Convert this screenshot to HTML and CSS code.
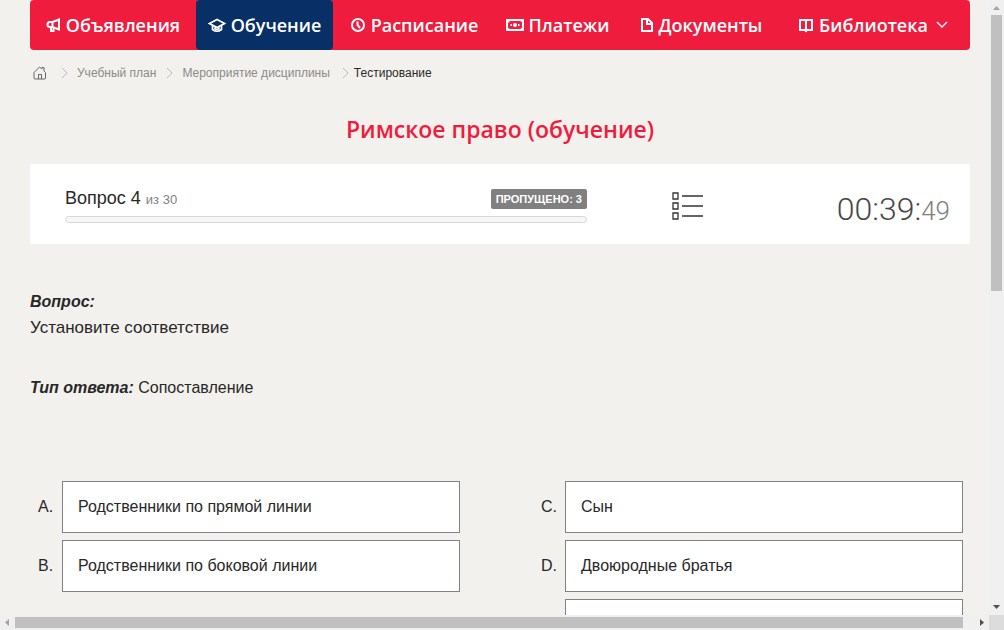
FILE: index.html
```html
<!DOCTYPE html>
<html lang="ru">
<head>
<meta charset="utf-8">
<title>Римское право (обучение)</title>
<link rel="stylesheet" href="styles.css">
</head>
<body>
<div class="frame">
  <div class="page">
    <nav class="nav">
      <a class="nav-item" href="#"><svg class="nav-icon" width="15" height="16" viewBox="0 0 15 16"><path d="M6.500 5L13 2.500v10L6.500 10H4a2.500 2.500 0 0 1 0-5z M6.500 4v7 M5 10v4h2.500v-3"/></svg>Объявления</a>
      <a class="nav-item nav-active" href="#"><svg class="nav-icon cap" width="18" height="16" viewBox="0 0 18 16"><path d="M1.500 6.500L9 2.500l7.500 4L9 10.500z M4.500 8.500v4q4.500 3.500 9 0v-4 M6.500 10.500q.5 2 2.500 2t2.500-2"/></svg>Обучение</a>
      <a class="nav-item" href="#"><svg class="nav-icon" width="16" height="16" viewBox="0 0 16 16"><circle cx="8" cy="8" r="6"/><path d="M7.500 4.500V8l2.500 3"/></svg>Расписание</a>
      <a class="nav-item" href="#"><svg class="nav-icon" width="18" height="16" viewBox="0 0 18 16"><rect x="1" y="3" width="16" height="10"/><path class="solid" d="M1 3h4L2 6zM13 3h4v3zM1 10l4 3H1zM17 10v3h-4z"/><circle class="solid" cx="9" cy="8" r="2"/><path d="M4.500 8h1.500M12 8h1.500"/></svg>Платежи</a>
      <a class="nav-item" href="#"><svg class="nav-icon" width="14" height="16" viewBox="0 0 14 16"><path d="M2 2h6l4 4v8H2z M7 2v5h5"/></svg>Документы</a>
      <a class="nav-item" href="#"><svg class="nav-icon" width="16" height="16" viewBox="0 0 16 16"><path d="M2 3h5l1 1 1-1h5v10H9l-1 1-1-1H2z M8 3v12"/></svg>Библиотека<svg class="chevron" width="12" height="8" viewBox="0 0 12 8"><path d="M1 1l5 5 5-5"/></svg></a>
    </nav>
    <nav class="crumbs">
      <a class="crumb-home" href="#" aria-label="Главная"><svg width="14" height="14" viewBox="0 0 14 14"><path d="M1 6.500l5.500-5.500L9 3V1.500h2V5l1.500 1.500V12q0 1-1 1H2q-1 0-1-1z M5.500 13V8.500h3V13"/></svg></a>
      <svg class="sep" width="8" height="12" viewBox="0 0 8 12"><path d="M1 1l5 5-5 5"/></svg>
      <a href="#">Учебный план</a>
      <svg class="sep" width="8" height="12" viewBox="0 0 8 12"><path d="M1 1l5 5-5 5"/></svg>
      <a href="#">Мероприятие дисциплины</a>
      <svg class="sep sep-last" width="8" height="12" viewBox="0 0 8 12"><path d="M1 1l5 5-5 5"/></svg>
      <span class="crumb-current">Тестирование</span>
    </nav>
    <h1 class="title">Римское право (обучение)</h1>
    <section class="status">
      <div class="progress">
        <div class="progress-head">
          <div class="counter">Вопрос 4 <small>из 30</small></div>
          <span class="badge">ПРОПУЩЕНО: 3</span>
        </div>
        <div class="bar"></div>
      </div>
      <button class="list-button" type="button" aria-label="Список вопросов"><svg width="31" height="28" viewBox="0 0 31 28"><path d="M1 1h5v6H1z M1 11h5v6H1z M1 21h5v6H1z"/><path d="M10 4h21M10 14h21M10 24h21"/></svg></button>
      <div class="timer">00:39:<span class="seconds">49</span></div>
    </section>
    <main class="question">
      <h2 class="label">Вопрос:</h2>
      <p class="text">Установите соответствие</p>
      <p class="type"><em class="label">Тип ответа:</em> Сопоставление</p>
      <div class="match">
        <ol class="column">
          <li class="row"><span class="letter">A.</span><div class="option">Родственники по прямой линии</div></li>
          <li class="row"><span class="letter">B.</span><div class="option">Родственники по боковой линии</div></li>
        </ol>
        <ol class="column">
          <li class="row"><span class="letter">C.</span><div class="option">Сын</div></li>
          <li class="row"><span class="letter">D.</span><div class="option">Двоюродные братья</div></li>
          <li class="row"><span class="letter"></span><div class="option"></div></li>
        </ol>
      </div>
    </main>
  </div>
  <div class="scroll scroll-y">
    <svg class="arrow dim" width="15" height="15" viewBox="0 0 15 15"><path d="M4 10l3.500-4L11 10z"/></svg>
    <div class="thumb thumb-y"></div>
    <div class="space-y"></div>
    <svg class="arrow" width="15" height="15" viewBox="0 0 15 15"><path d="M4 5h7L7.500 9z"/></svg>
  </div>
  <div class="scroll scroll-x">
    <svg class="arrow dim" width="15" height="15" viewBox="0 0 15 15"><path d="M9 4v7L5 7.500z"/></svg>
    <div class="thumb thumb-x"></div>
    <div class="space-x"></div>
    <svg class="arrow" width="15" height="15" viewBox="0 0 15 15"><path d="M6 4l4 3.500L6 11z"/></svg>
  </div>
  <div class="corner"></div>
</div>
</body>
</html>
```
FILE: styles.css
```css
* { box-sizing: border-box; }

body {
  margin: 0;
  background: #f3f1ed;
  color: #282828;
  font: 16px/26px "Liberation Sans", Arial, sans-serif;
}

a { color: inherit; text-decoration: none; }
h1, h2, p, ol { margin: 0; padding: 0; }
svg { fill: none; stroke: currentColor; flex: none; }

.frame {
  display: grid;
  grid-template: minmax(0, 1fr) 15px / minmax(0, 1fr) 15px;
  height: 100vh;
}

.page { padding: 0 19px 0 30px; overflow: hidden; }

.nav {
  display: grid;
  grid-template-columns: 166fr 137fr 162fr 125fr 162fr 182fr;
  height: 50px;
  padding-right: 6px;
  border-radius: 4px;
  background: #ef1c3e;
  color: #fff;
  font: 600 18px/50px "Open Sans", "Noto Sans", sans-serif;
}

.nav-item {
  display: flex;
  align-items: center;
  justify-content: center;
  gap: 5px;
  white-space: nowrap;
}

.nav-active { background: #082f66; border-radius: 4px; }
.nav-icon { stroke-width: 2; }
.cap { stroke-width: 1.7; }
.solid { fill: currentColor; stroke: none; }
.chevron { margin-left: 3px; stroke-width: 1.4; }

.crumbs {
  display: flex;
  align-items: center;
  height: 46px;
  padding-left: 3px;
  color: #8b8b8b;
  font-size: 12px;
  line-height: 16px;
}

.crumb-home { display: flex; margin-right: 14px; color: #666; }
.sep { margin: 0 8px 0 10px; color: #bbb; }
.crumb-home + .sep { margin-left: 0; }
.sep-last { margin: 0 4px 0 12px; }
.crumb-current { color: #282828; }

.title {
  height: 68px;
  color: #ef1c3e;
  font: 600 23px/66px "Open Sans", "Noto Sans", sans-serif;
  text-align: center;
}

.status {
  display: grid;
  grid-template-columns: 522fr 200fr 163fr;
  align-items: center;
  height: 80px;
  padding: 0 20px 0 35px;
  background: #fff;
}

.progress-head { display: flex; justify-content: space-between; align-items: center; height: 26px; }
.counter { font-size: 18px; }
.counter small { color: #828282; font-size: 13px; }

.badge {
  padding: 0 5px;
  border-radius: 2px;
  background: #808080;
  color: #fff;
  font-size: 11px;
  font-weight: bold;
  line-height: 20px;
}

.bar { height: 7px; margin-top: 4px; border: 1px solid #d8d8d8; border-radius: 4px; background: #f7f7f7; }

.list-button { display: flex; justify-content: center; margin: 4px 0 0; padding: 0; border: 0; background: none; color: #333; }
.list-button svg { stroke-width: 1.3; }

.timer {
  padding-top: 12px;
  color: #484848;
  font: 300 32px/40px Roboto, sans-serif;
  text-align: right;
}

.seconds { color: #808080; font-size: 26px; }

.question { padding-top: 45px; }
.label { font-size: 16px; font-weight: bold; font-style: italic; line-height: 26px; }
.text { font-size: 17px; }
.type { padding-top: 34px; }

.match { display: grid; grid-template-columns: 1fr 1fr; gap: 81px; padding: 80px 7px 0 8px; }
.column { display: grid; gap: 7px; align-content: start; list-style: none; }
.row { display: grid; grid-template-columns: 24px 1fr; }
.letter { line-height: 52px; }

.option {
  height: 52px;
  padding: 0 15px;
  border: 1px solid #808285;
  background: #fff;
  line-height: 50px;
}

.scroll { display: flex; background: #f0f0f1; }
.scroll-y { flex-direction: column; }
.thumb { background: #c0c0c0; }
.thumb-y { flex: 276; margin: 0 2px; }
.space-y { flex: 309; }
.thumb-x { flex: 948; margin: 2px 0; }
.space-x { flex: 11; }
.arrow { color: #505050; }
.arrow path { fill: currentColor; stroke: none; }
.dim { color: #a3a3a3; }
.corner { background: #dcdcdc; }
```
